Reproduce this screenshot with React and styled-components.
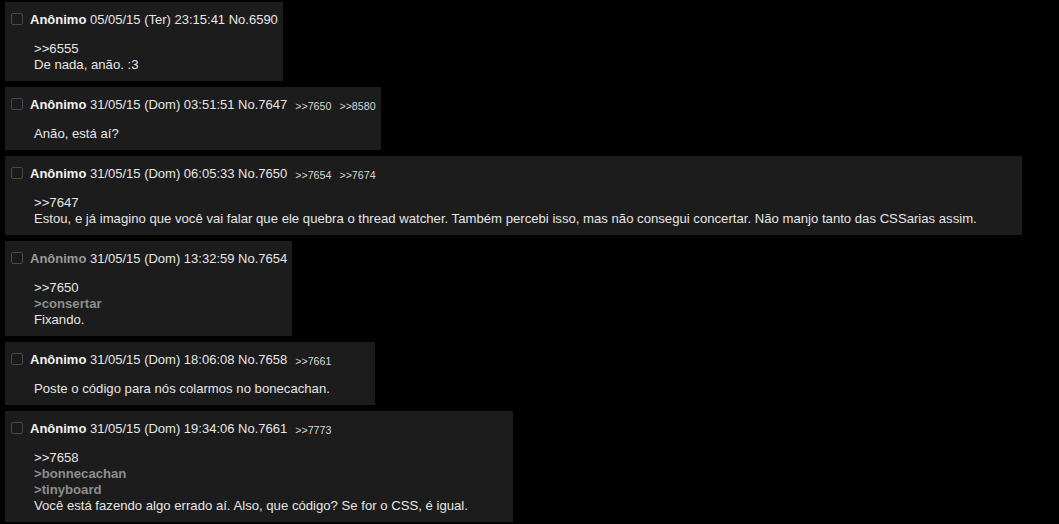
import React from "react";
import styled, { createGlobalStyle } from "styled-components";

const GlobalStyle = createGlobalStyle`
  html, body {
    margin: 0;
    padding: 0;
    background: #000;
  }
  body {
    font-family: "Liberation Sans", Arial, Helvetica, sans-serif;
    font-size: 13.15px;
    line-height: 16px;
    color: #e6e6e6;
  }
`;

const Thread = styled.div`
  display: flex;
  flex-direction: column;
  align-items: flex-start;
  gap: 6px;
  padding: 2px 0 0 5px;
`;

const Post = styled.div`
  background: #1c1c1c;
  padding: 3px 5px 8px 6px;
  box-sizing: border-box;
`;

const Intro = styled.p`
  margin: 7px 0 0 0;
  display: flex;
  align-items: center;
  white-space: nowrap;
  line-height: 16px;
  font-size: 13px;
`;

const Check = styled.input.attrs({ type: "checkbox" })`
  appearance: none;
  -webkit-appearance: none;
  width: 12px;
  height: 12px;
  margin: 0 7px 0 0;
  box-sizing: border-box;
  border: 1px solid #484848;
  border-radius: 2px;
  background: #1a1a1a;
  position: relative;
  top: -1px;
`;

const Name = styled.span`
  font-weight: bold;
  color: ${(p) => (p.$dim ? "#9a9a9a" : "#f2f2f2")};
`;

const Meta = styled.span`
  color: #e6e6e6;
  white-space: pre;
`;

const Backlinks = styled.span`
  display: inline-flex;
  align-items: baseline;
  align-self: baseline;
`;

const Backlink = styled.a`
  font-size: 10.67px;
  color: #d8d8d8;
  text-decoration: none;
  margin-left: 8px;
  position: relative;
  top: 1px;
`;

const Body = styled.div`
  margin: 13px 0 0 23px;
  padding-right: 40px;
  line-height: 16px;
`;

const Line = styled.div`
  white-space: nowrap;
`;

const Quote = styled.span`
  font-weight: bold;
  color: #8e8e8e;
`;

const Ref = styled.a`
  color: #e6e6e6;
  text-decoration: none;
`;

const posts = [
  {
    date: "05/05/15 (Ter) 23:15:41",
    no: 6590,
    backlinks: [],
    body: [{ ref: ">>6555" }, "De nada, anão. :3"],
  },
  {
    date: "31/05/15 (Dom) 03:51:51",
    no: 7647,
    backlinks: [7650, 8580],
    body: ["Anão, está aí?"],
  },
  {
    date: "31/05/15 (Dom) 06:05:33",
    no: 7650,
    backlinks: [7654, 7674],
    body: [
      { ref: ">>7647" },
      "Estou, e já imagino que você vai falar que ele quebra o thread watcher. Também percebi isso, mas não consegui concertar. Não manjo tanto das CSSarias assim.",
    ],
  },
  {
    date: "31/05/15 (Dom) 13:32:59",
    no: 7654,
    dim: true,
    backlinks: [],
    body: [{ ref: ">>7650" }, { quote: ">consertar" }, "Fixando."],
  },
  {
    date: "31/05/15 (Dom) 18:06:08",
    no: 7658,
    backlinks: [7661],
    body: ["Poste o código para nós colarmos no bonecachan."],
  },
  {
    date: "31/05/15 (Dom) 19:34:06",
    no: 7661,
    backlinks: [7773],
    body: [
      { ref: ">>7658" },
      { quote: ">bonnecachan" },
      { quote: ">tinyboard" },
      "Você está fazendo algo errado aí. Also, que código? Se for o CSS, é igual.",
    ],
  },
];

function renderLine(item, i) {
  if (typeof item === "string") return <Line key={i}>{item}</Line>;
  if (item.ref)
    return (
      <Line key={i}>
        <Ref href="#">{item.ref}</Ref>
      </Line>
    );
  return (
    <Line key={i}>
      <Quote>{item.quote}</Quote>
    </Line>
  );
}

export default function App() {
  return (
    <>
      <GlobalStyle />
      <Thread>
        {posts.map((p) => (
          <Post key={p.no}>
            <Intro>
              <Check />
              <Name $dim={p.dim}>Anônimo</Name>
              <Meta>{` ${p.date} No.${p.no}`}</Meta>
              {p.backlinks.length > 0 && (
                <Backlinks>
                  {p.backlinks.map((b) => (
                    <Backlink key={b} href="#">{`>>${b}`}</Backlink>
                  ))}
                </Backlinks>
              )}
            </Intro>
            <Body>{p.body.map(renderLine)}</Body>
          </Post>
        ))}
      </Thread>
    </>
  );
}
